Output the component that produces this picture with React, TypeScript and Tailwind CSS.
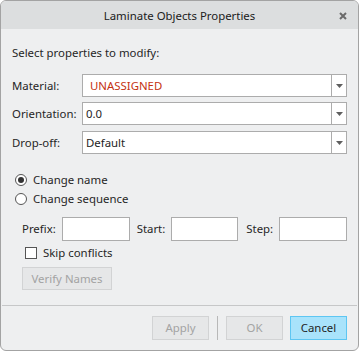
import React from 'react';

const Combo: React.FC<{ value: string; red?: boolean }> = ({ value, red }) => (
  <div className="flex-1 h-[23px] flex bg-white border border-[#acacac]">
    <div className={`flex-1 flex items-center ${red ? 'pl-[7px] text-[#c4310f]' : 'pl-[3px] text-[#1e1e1e]'}`}>{value}</div>
    <div className="w-[15px] border-l border-[#acacac] flex items-center justify-center">
      <svg width="7" height="4" viewBox="0 0 7 4">
        <path d="M0 0H7L3.5 4Z" fill="#5f5f5f" />
      </svg>
    </div>
  </div>
);

const Field: React.FC<{ label: string; children: React.ReactNode }> = ({ label, children }) => (
  <div className="flex items-center">
    <div className="w-[70px]">{label}</div>
    {children}
  </div>
);

const Btn: React.FC<{ label: string; primary?: boolean }> = ({ label, primary }) => (
  <div
    className={`w-[57px] h-[24px] flex items-center justify-center border ${
      primary ? 'bg-[#a9e3fb] border-[#5ec6f2] text-[#1e1e1e]' : 'bg-[#e6e7e8] border-[#d2d3d4] text-[#a3a3a3]'
    }`}
  >
    {label}
  </div>
);

export default function App() {
  return (
    <div
      className="w-[359px] h-[351px] flex flex-col border border-[#a3a3a3] rounded-[6px] overflow-hidden bg-[#eeeff0] text-[11.4px] leading-[16px] text-[#262626]"
      style={{ fontFamily: '"Segoe UI", "Noto Sans", sans-serif' }}
    >
      {/* Title */}
      <div className="h-[28px] bg-[#dcdedf] flex items-center relative">
        <div className="flex-1 text-center text-[#202020] pt-[1px]">Laminate Objects Properties</div>
        <svg className="absolute right-[11px] top-[11px]" width="8" height="8" viewBox="0 0 8 8">
          <path d="M1 1L7 7M7 1L1 7" stroke="#6a6a6a" strokeWidth="2" />
        </svg>
      </div>

      {/* Body */}
      <div className="flex-1 pl-[11px] pr-[11px] pt-[16px]">
        <div>Select properties to modify:</div>
        <div className="mt-[13px] flex flex-col">
          <Field label="Material:"><Combo value="UNASSIGNED" red /></Field>
          <div className="mt-[5px]"><Field label="Orientation:"><Combo value="0.0" /></Field></div>
          <div className="mt-[6px]"><Field label="Drop-off:"><Combo value="Default" /></Field></div>
        </div>

        <div className="mt-[16px] flex flex-col">
          <div className="h-[19px] flex items-center">
            <div className="w-[12px] h-[12px] ml-[3px] rounded-full border border-[#555] bg-white flex items-center justify-center">
              <div className="w-[6px] h-[6px] rounded-full bg-[#333]" />
            </div>
            <span className="ml-[6px]">Change name</span>
          </div>
          <div className="h-[19px] flex items-center">
            <div className="w-[12px] h-[12px] ml-[3px] rounded-full border border-[#555] bg-white" />
            <span className="ml-[6px]">Change sequence</span>
          </div>
        </div>

        <div className="mt-[9px] ml-[10px] flex items-center">
          <span className="w-[40px]">Prefix:</span>
          <div className="w-[68px] h-[24px] bg-white border border-[#acacac]" />
          <span className="ml-[7px] w-[34px]">Start:</span>
          <div className="w-[68px] h-[24px] bg-white border border-[#acacac]" />
          <span className="ml-[8px] w-[33px]">Step:</span>
          <div className="w-[68px] h-[24px] bg-white border border-[#acacac]" />
        </div>

        <div className="mt-[5px] ml-[13px] h-[13px] flex items-center">
          <div className="w-[12px] h-[12px] border border-[#555] bg-white" />
          <span className="ml-[6px]">Skip conflicts</span>
        </div>

        <div className="mt-[8px] ml-[10px] w-[90px] h-[23px] flex items-center justify-center bg-[#e6e7e8] border border-[#d2d3d4] text-[#a3a3a3]">
          Verify Names
        </div>
      </div>

      {/* Footer */}
      <div className="mx-[1px] border-t border-[#c6c7c8] h-[45px] flex items-start justify-end pt-[10px] pr-[10px]">
        <Btn label="Apply" />
        <div className="w-[1px] h-[24px] bg-[#b8b8b8] mx-[8px]" />
        <Btn label="OK" />
        <div className="w-[7px]" />
        <Btn label="Cancel" primary />
      </div>
    </div>
  );
}
